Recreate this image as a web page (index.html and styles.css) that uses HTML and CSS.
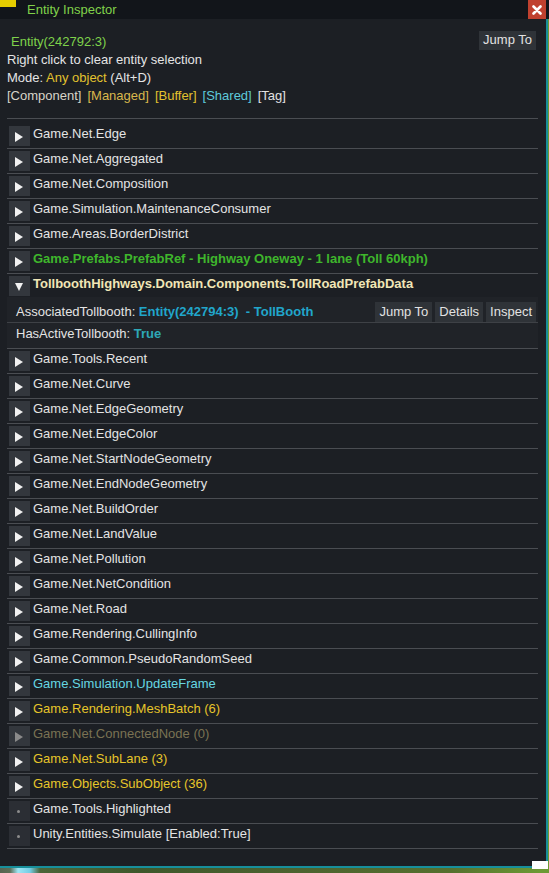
FILE: index.html
```html
<!DOCTYPE html>
<html>
<head>
<meta charset="utf-8">
<link rel="stylesheet" href="styles.css">
</head>
<body>
<div class="app">
  <div class="titlebar">
    <span class="badge"></span>
    <span class="title">Entity Inspector</span>
    <span class="close"><svg width="10" height="10" viewBox="0 0 10 10"><path d="M1.5 1.5 L8.5 8.5 M8.5 1.5 L1.5 8.5" stroke="#fff" stroke-width="2.6" stroke-linecap="round"/></svg></span>
  </div>
  <div class="main">
    <div class="panel">
      <div class="header">
        <div class="entity-row">
          <span class="entity">Entity(242792:3)</span>
          <span class="btn">Jump To</span>
        </div>
        <div class="line">Right click to clear entity selection</div>
        <div class="line">Mode: <span class="c-yellow">Any object</span> (Alt+D)</div>
        <div class="line legend"><span class="c-comp">[Component]</span><span class="c-managed">[Managed]</span><span class="c-yellow">[Buffer]</span><span class="c-cyan">[Shared]</span><span class="c-tag">[Tag]</span></div>
      </div>
      <div class="sep"></div>
      <div class="list">
        <div class="row"><span class="tog"></span><span class="name">Game.Net.Edge</span></div>
        <div class="row"><span class="tog"></span><span class="name">Game.Net.Aggregated</span></div>
        <div class="row"><span class="tog"></span><span class="name">Game.Net.Composition</span></div>
        <div class="row"><span class="tog"></span><span class="name">Game.Simulation.MaintenanceConsumer</span></div>
        <div class="row"><span class="tog"></span><span class="name">Game.Areas.BorderDistrict</span></div>
        <div class="row"><span class="tog"></span><span class="name prefab">Game.Prefabs.PrefabRef - Highway Oneway - 1 lane (Toll 60kph)</span></div>
        <div class="row open"><span class="tog down"></span><span class="name custom">TollboothHighways.Domain.Components.TollRoadPrefabData</span></div>
        <div class="fields">
          <div class="field first">
            <span class="fname">AssociatedTollbooth: <span class="fval">Entity(242794:3)&nbsp; - TollBooth</span></span>
            <span class="btns"><span class="btn sm">Jump To</span><span class="btn sm">Details</span><span class="btn sm">Inspect</span></span>
          </div>
          <div class="field">
            <span class="fname">HasActiveTollbooth: <span class="fval2">True</span></span>
          </div>
        </div>
        <div class="row"><span class="tog"></span><span class="name">Game.Tools.Recent</span></div>
        <div class="row"><span class="tog"></span><span class="name">Game.Net.Curve</span></div>
        <div class="row"><span class="tog"></span><span class="name">Game.Net.EdgeGeometry</span></div>
        <div class="row"><span class="tog"></span><span class="name">Game.Net.EdgeColor</span></div>
        <div class="row"><span class="tog"></span><span class="name">Game.Net.StartNodeGeometry</span></div>
        <div class="row"><span class="tog"></span><span class="name">Game.Net.EndNodeGeometry</span></div>
        <div class="row"><span class="tog"></span><span class="name">Game.Net.BuildOrder</span></div>
        <div class="row"><span class="tog"></span><span class="name">Game.Net.LandValue</span></div>
        <div class="row"><span class="tog"></span><span class="name">Game.Net.Pollution</span></div>
        <div class="row"><span class="tog"></span><span class="name">Game.Net.NetCondition</span></div>
        <div class="row"><span class="tog"></span><span class="name">Game.Net.Road</span></div>
        <div class="row"><span class="tog"></span><span class="name">Game.Rendering.CullingInfo</span></div>
        <div class="row"><span class="tog"></span><span class="name">Game.Common.PseudoRandomSeed</span></div>
        <div class="row"><span class="tog"></span><span class="name c-shared">Game.Simulation.UpdateFrame</span></div>
        <div class="row"><span class="tog"></span><span class="name c-buffer">Game.Rendering.MeshBatch (6)</span></div>
        <div class="row"><span class="tog dim"></span><span class="name c-empty">Game.Net.ConnectedNode (0)</span></div>
        <div class="row"><span class="tog"></span><span class="name c-buffer">Game.Net.SubLane (3)</span></div>
        <div class="row"><span class="tog"></span><span class="name c-buffer">Game.Objects.SubObject (36)</span></div>
        <div class="row"><span class="tog leaf"></span><span class="name">Game.Tools.Highlighted</span></div>
        <div class="row"><span class="tog leaf"></span><span class="name">Unity.Entities.Simulate [Enabled:True]</span></div>
      </div>
    </div>
  </div>
  <div class="resize"></div>
</div>
</body>
</html>
```
FILE: styles.css
```css
html, body {
  margin: 0;
  padding: 0;
}
body {
  width: 549px;
  height: 873px;
  overflow: hidden;
  font-family: "Liberation Sans", Arial, sans-serif;
  font-size: 13px;
  color: #e4e4e4;
  background: linear-gradient(90deg, #566450 0px, #5d6e56 10px, #9fe6f4 18px, #74cde4 30px, #4b6538 40px, #3e582b 140px, #4c632f 300px, #55702e 450px, #6c9a34 540px);
}
.app {
  position: relative;
  width: 549px;
  height: 873px;
  display: flex;
  flex-direction: column;
}
.titlebar {
  height: 19px;
  background: #12151a;
  display: flex;
  align-items: flex-start;
  padding-right: 3px;
}
.badge {
  width: 16px;
  height: 7px;
  background: #e6cd00;
  margin-right: 11px;
}
.title {
  color: #80d14a;
  line-height: 19px;
}
.close {
  margin-left: auto;
  width: 18px;
  height: 19px;
  background: #c0412f;
  display: flex;
  align-items: center;
  justify-content: center;
}
.main {
  display: flex;
}
.panel {
  width: 546px;
  height: 847px;
  background: #1c1f24;
  border-right: 2px solid #178f9b;
  border-bottom: 2px solid #178f9b;
}
.header {
  padding: 12px 10px 0 7px;
}
.entity-row {
  display: flex;
  align-items: flex-start;
  justify-content: space-between;
}
.entity {
  color: #7fd24b;
  margin-left: 4px;
  margin-top: 1.5px;
  line-height: 18px;
}
.btn {
  background: #2f3338;
  color: #e2e2e2;
  height: 19px;
  line-height: 18px;
  padding: 0 4px;
}
.line {
  line-height: 18px;
}
.legend {
  display: flex;
  gap: 6px;
}
.c-yellow { color: #e3c22e; }
.c-comp { color: #d8d4c8; }
.c-managed { color: #d9b84c; }
.c-cyan { color: #5fcadb; }
.c-tag { color: #e2e2e2; }
.sep {
  height: 1px;
  background: #4a4d52;
  margin: 13.5px 8px 0 7px;
}
.list {
  margin: 0 8px 0 7px;
  padding-top: 5px;
}
.row {
  display: flex;
  align-items: flex-start;
  gap: 3px;
  padding: 2px 0 2px 2px;
  border-bottom: 1px solid #4a4d52;
}
.row.open {
  border-bottom: none;
  padding-bottom: 1px;
}
.tog {
  width: 21px;
  height: 20px;
  flex: none;
  box-sizing: border-box;
  background: #33373d;
  display: flex;
  align-items: flex-start;
  padding: 6px 0 0 6px;
}
.tog::before {
  content: "";
  width: 0;
  height: 0;
  border-left: 8.5px solid #f2f2f2;
  border-top: 5px solid transparent;
  border-bottom: 5px solid transparent;
}
.tog.dim::before {
  border-left-color: #8a8a8a;
}
.tog.down {
  padding: 7px 0 0 6px;
}
.tog.down::before {
  border-left: 4.5px solid transparent;
  border-right: 4.5px solid transparent;
  border-top: 8px solid #f2f2f2;
  border-bottom: none;
}
.tog.leaf {
  background: #2b2e34;
  padding: 9px 0 0 8px;
}
.tog.leaf::before {
  width: 3px;
  height: 3px;
  border: none;
  border-radius: 50%;
  background: #8c8c8c;
}
.name {
  line-height: 15px;
  white-space: nowrap;
}
.prefab {
  color: #3fb62c;
  font-weight: bold;
}
.custom {
  color: #f1e6b6;
  font-weight: bold;
}
.c-shared { color: #66d6e2; }
.c-buffer { color: #e6c52a; }
.c-empty { color: #7a7253; }
.fields {
  background: #202328;
  border-bottom: 1px solid #4a4d52;
}
.field {
  display: flex;
  align-items: baseline;
  padding: 3px 2px 7px 9px;
  line-height: 15px;
}
.field.first {
  padding: 5px 2px 0 9px;
  line-height: 20px;
  border-bottom: 1px solid #3e4146;
}
.fval {
  color: #21a6cb;
  font-weight: bold;
  white-space: pre;
}
.fval2 {
  color: #2ea8b6;
  font-weight: bold;
}
.btns {
  margin-left: auto;
  display: flex;
  gap: 3px;
}
.btn.sm {
  height: 20px;
  line-height: 20px;
}
.resize {
  position: absolute;
  left: 532px;
  top: 861px;
  width: 16px;
  height: 8px;
  background: #ffffff;
}
```
